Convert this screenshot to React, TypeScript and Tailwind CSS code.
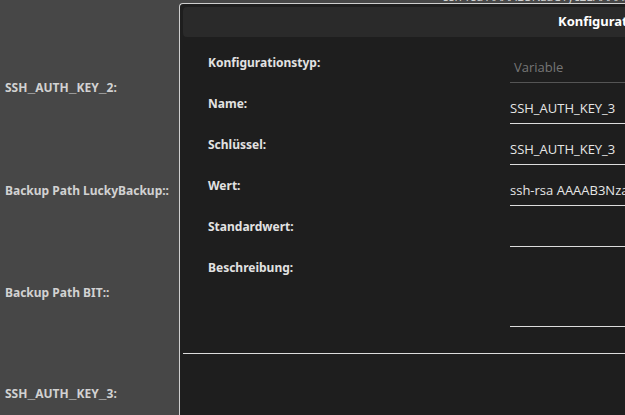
import React from 'react';

const rows = [
  { label: 'SSH_AUTH_KEY_1:', value: 'ssh-rsa AAAAB3NzaC1yc2EAAAADAQABAAABgQC7 root@backup' },
  { label: 'SSH_AUTH_KEY_2:', value: 'ssh-rsa AAAAB3NzaC1yc2EAAAADAQABAAABgQD2 admin@nas' },
  { label: 'Backup Path LuckyBackup::', value: '/mnt/backup/luckybackup' },
  { label: 'Backup Path BIT::', value: '/mnt/backup/bit' },
  { label: 'SSH_AUTH_KEY_3:', value: 'ssh-rsa AAAAB3NzaC1yc2EAAAADAQABAAABgQE4' },
];

function Wide({ text }: { text: string }) {
  const parts = text.split('_');
  return (
    <>
      {parts.map((p, i) => (
        <React.Fragment key={i}>
          {p}
          {i < parts.length - 1 && <span className="font-['Liberation_Mono'] text-[13px]">_</span>}
        </React.Fragment>
      ))}
    </>
  );
}

function Field({ label, value, placeholder, tall }: { label: string; value?: string; placeholder?: string; tall?: boolean }) {
  return (
    <div className="flex">
      <div className="w-[302px] shrink-0 pt-[1px] text-[12px] leading-4 font-bold text-[#e2e2e2]">{label}</div>
      <div
        className={`w-[400px] flex items-center border-b text-[13px] ${tall ? 'h-[68px]' : 'h-[29px]'} ${
          placeholder ? 'border-[#555]' : 'border-[#dcdcdc]'
        }`}
        style={{ fontFamily: '"Open Sans", "Noto Sans", sans-serif' }}
      >
        {value ? (
          <span className="text-[#e6e6e6] whitespace-nowrap">{value}</span>
        ) : (
          <span className="pl-[4px] text-[#767676]">{placeholder}</span>
        )}
      </div>
    </div>
  );
}

export default function App() {
  return (
    <div
      className="relative w-[625px] h-[415px] overflow-hidden bg-[#474747]"
      style={{ fontFamily: '"Noto Sans", "Open Sans", sans-serif' }}
    >
      {/* list behind the dialog */}
      <div className="flex flex-col mt-[-64px]">
        {rows.map((r) => (
          <div key={r.label} className="h-[102px] flex items-center">
            <div className="w-[443px] shrink-0 pl-[5px] text-[12px] font-bold text-[#d2d2d2]">
              <Wide text={r.label} />
            </div>
            <div className="text-[12px] text-[#cfcfcf] whitespace-nowrap translate-y-[10px]">{r.value}</div>
          </div>
        ))}
      </div>

      {/* edit dialog */}
      <div className="absolute left-[179px] top-[3px] w-[900px] h-[480px] bg-[#1e1e1e] border-l border-t border-[#cfcfcf] rounded-tl-[4px] p-[3px]">
        <div className="h-[30px] rounded-[4px] bg-[#2a2a2a] flex items-center pl-[375px] text-[13px] font-bold text-white">
          Konfigurationsvariable bearbeiten
        </div>
        <div className="pl-[25px] pt-[17px] flex flex-col gap-[12px]">
          <Field label="Konfigurationstyp:" placeholder="Variable" />
          <Field label="Name:" value="SSH_AUTH_KEY_3" />
          <Field label="Schlüssel:" value="SSH_AUTH_KEY_3" />
          <Field label="Wert:" value="ssh-rsa AAAAB3NzaC1yc2EAAAADAQABAAABgQE4" />
          <Field label="Standardwert:" />
          <Field label="Beschreibung:" tall />
        </div>
        <div className="mt-[26px] border-t border-[#dcdcdc]" />
      </div>
    </div>
  );
}
